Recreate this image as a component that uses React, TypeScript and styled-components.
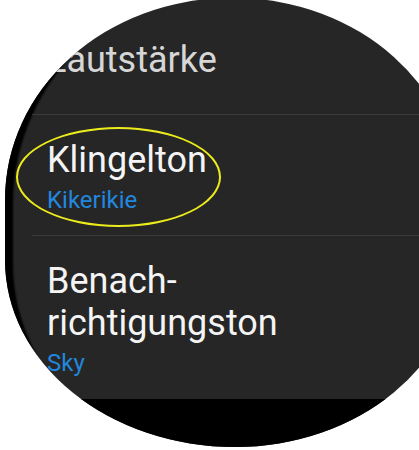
import React from 'react';
import styled, { createGlobalStyle } from 'styled-components';

const GlobalStyle = createGlobalStyle`
  html, body {
    margin: 0;
    padding: 0;
    background: #ffffff;
    overflow: hidden;
  }
  body {
    font-family: Roboto, "Liberation Sans", sans-serif;
  }
`;

const Page = styled.div`
  position: relative;
  width: 419px;
  height: 450px;
  overflow: hidden;
  background: #ffffff;
`;

// round watch face, photographed a little skewed, so each corner gets its own radii
const Watch = styled.div`
  width: 455px;
  height: 449px;
  margin: -2px 0 0 5px;
  background: #262626;
  border-radius: 225px 225px 225px 230px / 202px 202px 187px 187px;
  box-shadow: inset 40px 4px 2px -32px #000;
  overflow: hidden;
  display: flex;
  flex-direction: column;
`;

const Row = styled.div<{ $top: number; $bottom: number; $divider?: boolean }>`
  padding: ${p => p.$top}px 0 ${p => p.$bottom}px ${p => (p.$divider ? 15 : 42)}px;
  margin-left: ${p => (p.$divider ? 27 : 0)}px;
  border-top: ${p => (p.$divider ? '1px solid #3a3a3a' : 'none')};
`;

const Title = styled.div<{ $dim?: boolean }>`
  font-size: 36px;
  line-height: 42px;
  color: ${p => (p.$dim ? '#d6d6d6' : '#f4f4f4')};
  white-space: nowrap;
`;

const Value = styled.div`
  margin-top: 4px;
  font-size: 24px;
  line-height: 30px;
  color: #2187df;
`;

const Footer = styled.div`
  flex: 1;
  background: #000;
`;

const Highlight = styled.div`
  position: absolute;
  left: 16px;
  top: 127px;
  width: 201px;
  height: 96px;
  border: 2px solid #ecec1c;
  border-radius: 50%;
  pointer-events: none;
`;

export default function App() {
  return (
    <Page>
      <GlobalStyle />
      <Watch>
        <Row $top={41} $bottom={33}>
          <Title $dim>Lautstärke</Title>
        </Row>
        <Row $top={24} $bottom={20} $divider>
          <Title>Klingelton</Title>
          <Value>Kikerikie</Value>
        </Row>
        <Row $top={24} $bottom={21} $divider>
          <Title>
            Benach-
            <br />
            richtigungston
          </Title>
          <Value>Sky</Value>
        </Row>
        <Footer />
      </Watch>
      <Highlight />
    </Page>
  );
}
